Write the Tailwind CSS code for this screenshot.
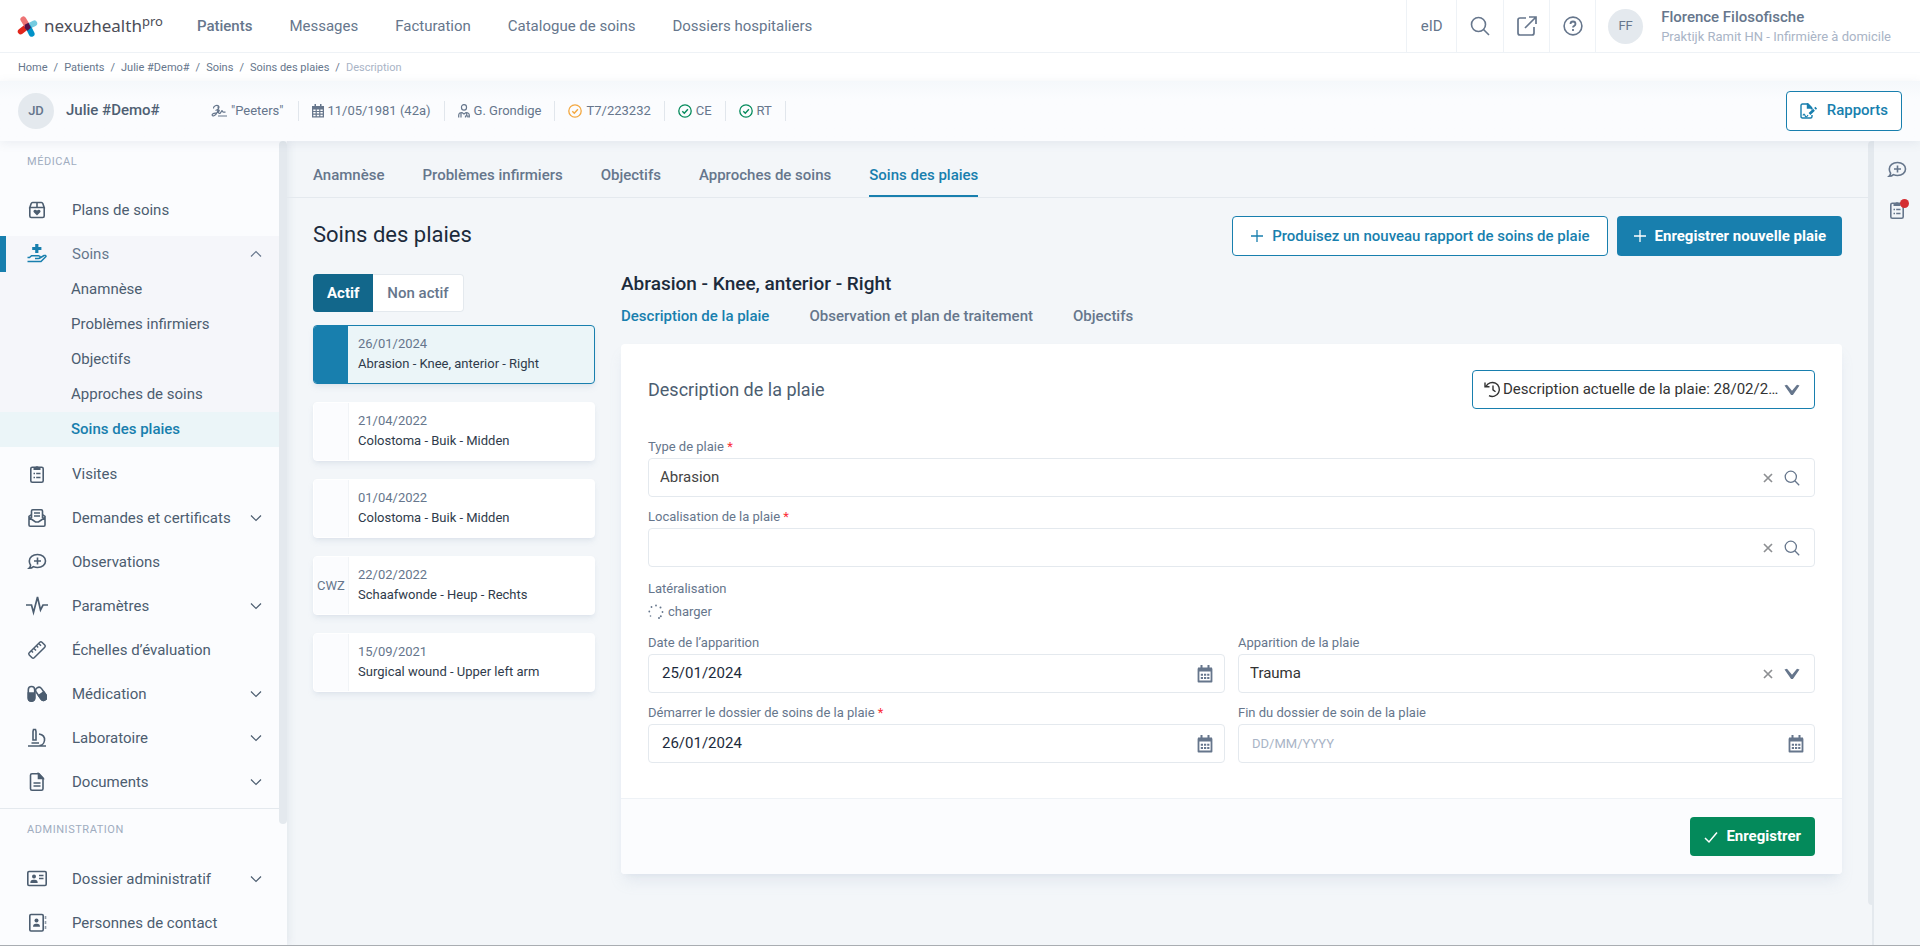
<!DOCTYPE html>
<html lang="fr">
<head>
  <meta charset="UTF-8">
  <meta name="viewport" content="width=device-width, initial-scale=1.0">
  <title>Soins des plaies</title>
  <script src="https://cdn.jsdelivr.net/npm/@tailwindcss/browser@4"></script>
</head>
<body class="flex h-screen flex-col overflow-hidden border-b border-[#a9adb2] bg-[#f3f6f9] font-['Roboto',sans-serif] text-[15px] text-[#66768c]">

  <!-- shared icons -->
  <svg class="hidden">
    <symbol id="down" viewBox="0 0 12 8"><path d="M1 1.5l5 5 5-5" fill="none" stroke="currentColor" stroke-width="1.2"/></symbol>
    <symbol id="bold-down" viewBox="0 0 16 12"><path d="M.5 1.5L3 .8l5 6 5-6 2.500.7L8.900 11H7.100z" fill="currentColor"/></symbol>
    <symbol id="cross" viewBox="0 0 10 10"><path d="M1 1l8 8M9 1l-8 8" fill="none" stroke="currentColor" stroke-width="1.700"/></symbol>
    <symbol id="plus" viewBox="0 0 14 14"><path d="M7 1v12M1 7h12" fill="none" stroke="currentColor" stroke-width="1.3"/></symbol>
    <symbol id="search" viewBox="0 0 20 20"><g fill="none" stroke="currentColor" stroke-width="1.6"><circle cx="8.5" cy="8.5" r="7"/><path d="M13.5 13.5l5.5 5.5"/></g></symbol>
    <symbol id="chat" viewBox="0 0 20 20"><g fill="none" stroke="currentColor" stroke-width="1.6"><path d="M10.500 2.500c4.700 0 8 2.800 8 6.500s-3.300 6.500-8 6.500c-1.500 0-2.800-.3-4-.9-1 1-2.500 1.700-4.500 1.700 1-.9 1.500-1.900 1.600-3-.8-1.200-1.300-2.600-1.300-4.300 0-3.700 3.500-6.500 8.200-6.500z"/><path d="M10.500 5.500v7M7 9h7"/></g></symbol>
    <symbol id="check" viewBox="0 0 14 14"><circle cx="7" cy="7" r="6.200" fill="none" stroke="currentColor" stroke-width="1.300"/><path d="M4.300 7.200l2 2 3.600-4" fill="none" stroke="currentColor" stroke-width="1.400"/></symbol>
    <symbol id="clip" viewBox="0 0 16 20"><rect x="1.800" y="3.300" width="12.400" height="15" rx="1.500" fill="none" stroke="currentColor" stroke-width="1.600"/><path d="M4.500 6V3.500h1.700a1.900 1.900 0 0 1 3.600 0h1.700V6z" fill="currentColor"/><path d="M4.500 9.500h1.500M7.200 9.500h4.300M4.500 13.500h1.500M7.200 13.500h4.300" stroke="currentColor" stroke-width="1.400"/></symbol>
    <symbol id="cal" viewBox="0 0 16 18"><path d="M1.500 4h13v12.500h-13z" fill="none" stroke="currentColor" stroke-width="1.800" stroke-linejoin="round"/><path d="M1 2.500h14v4H1zM3.500 0h2v3h-2zM10.500 0h2v3h-2z" fill="currentColor"/><path d="M3.800 9.700h8.600M3.800 12.900h8.600" stroke="currentColor" stroke-width="2" stroke-dasharray="2.200 1"/></symbol>
  </svg>

  <header class="flex h-[53px] shrink-0 items-stretch border-b border-[#eef2f6] bg-white">
    <a href="#" class="flex items-center gap-1.5 pl-[17px] text-[#4c4d57]">
      <svg class="size-[21px]" viewBox="0 0 20 20"><g stroke-width="5.500" stroke-linecap="round"><path d="M3.500 14.800L9 10.500" stroke="#e1261c"/><path d="M6 3.200L9.500 9" stroke="#ee7475"/><path d="M16.500 7L11 9.800" stroke="#74cbe0"/><path d="M11 11l3 6" stroke="#0092c8"/></g><path d="M7.300 8.300l3.700-1.800 2.200 4.700-3.300 2.800-2.600-2.500z" fill="#54124b"/></svg>
      <span class="flex items-start font-['Noto_Sans',sans-serif] text-[17px] leading-5"><span>nexuzhealth</span><sup class="top-0 text-[13px] leading-[10px]">pro</sup></span>
    </a>
    <nav class="ml-[34px] flex items-center gap-[37px]">
      <a href="#" class="font-medium">Patients</a>
      <a href="#">Messages</a>
      <a href="#">Facturation</a>
      <a href="#">Catalogue de soins</a>
      <a href="#">Dossiers hospitaliers</a>
    </nav>
    <div class="ml-auto flex items-stretch">
      <button class="w-[50px] border-l border-[#eef2f6]">eID</button>
      <button class="flex w-[47px] items-center justify-center border-l border-[#eef2f6]" aria-label="Rechercher"><svg class="size-5"><use href="#search"/></svg></button>
      <button class="flex w-[46px] items-center justify-center border-l border-[#eef2f6]" aria-label="Ouvrir"><svg class="size-5" viewBox="0 0 20 20" fill="none" stroke="currentColor" stroke-width="1.700"><path d="M9 2H3Q1 2 1 4v13q0 2 2 2h12q2 0 2-2v-6M12 1h7v7M19 1L8 12"/></svg></button>
      <button class="flex w-[47px] items-center justify-center border-x border-[#eef2f6]" aria-label="Aide"><svg class="size-5" viewBox="0 0 20 20" fill="none" stroke="currentColor" stroke-width="1.600"><circle cx="10" cy="10" r="8.900"/><path d="M7.500 8q0-2.500 2.500-2.500T12.500 8q0 1.200-1.300 1.900-1.200.6-1.200 1.600M10 13v2" stroke-width="1.800"/></svg></button>
      <div class="flex items-center pr-[29px] pl-3">
        <span class="flex size-[35px] items-center justify-center rounded-full bg-[#e4e9ee] text-[13px]">FF</span>
        <div class="ml-[18px] pt-0.5">
          <div class="text-[15px] leading-5 font-medium">Florence Filosofische</div>
          <div class="text-[13px] leading-5 text-[#a9b4c6]">Praktijk Ramit HN - Infirmière à domicile</div>
        </div>
      </div>
    </div>
  </header>

  <nav class="flex h-7 shrink-0 items-center gap-1.5 bg-white pt-0.5 pl-[18px] text-[11px]">
    <a href="#">Home</a><span>/</span>
    <a href="#">Patients</a><span>/</span>
    <a href="#">Julie #Demo#</a><span>/</span>
    <a href="#">Soins</a><span>/</span>
    <a href="#">Soins des plaies</a><span>/</span>
    <span class="text-[#a9b4c6]">Description</span>
  </nav>

  <section class="relative z-10 flex h-[60px] shrink-0 items-center bg-[#fbfcfe] bg-linear-to-b from-[#f5f8fb] to-[#fbfcfe] to-30% px-[18px] pb-px shadow-[0_2px_10px_rgba(90,110,140,0.10)]">
    <span class="flex size-9 items-center justify-center rounded-full bg-[#e4e9ee] text-[13px] font-medium">JD</span>
    <h1 class="ml-3 w-[145px] text-[15px] font-medium text-[#4f5f73]">Julie #Demo#</h1>
    <ul class="flex items-center text-[13px]">
      <li class="flex h-5 items-center gap-1 border-r border-[#e1e6ec] pr-3.5"><svg class="size-4" viewBox="0 0 16 16" fill="none" stroke="currentColor" stroke-width="1.200"><path d="M2.500 5.500c-.5-2.500 3.500-4 5-2.500s-.5 4-3 4.500M7 3.500c1 3-1 8-4 9.200-2 .6-2.500-1-1-2 1.500-.8 3.500-.5 5-1.500s1.500-2 1-2-1.500 2 0 3 2.500-2.500 3-2.500.5 1.500 1.500 1.500h2M7 13h9"/></svg>"Peeters"</li>
      <li class="flex h-5 items-center gap-1 border-r border-[#e1e6ec] px-[13px]"><svg class="h-3.5 w-3" viewBox="0 0 12 14"><path d="M0 2h12v11.500H0z" fill="currentColor"/><path d="M1.300 6.200h2.300M4.800 6.200h2.400M8.400 6.200h2.300M1.300 8.800h2.300M4.800 8.800h2.400M8.400 8.800h2.300M1.300 11.400h2.300M4.800 11.400h2.400M8.400 11.400h2.300" stroke="#fff" stroke-width="1.500"/><path d="M2.500 0h1.500v3H2.500zM8 0h1.500v3H8z" fill="currentColor"/></svg>11/05/1981 (42a)</li>
      <li class="flex h-5 items-center gap-1 border-r border-[#e1e6ec] px-[13px]"><svg class="h-3.5 w-3" viewBox="0 0 12 14" fill="none" stroke="currentColor" stroke-width="1.200"><rect x="3.500" y=".7" width="5" height="5.500" rx="2.400"/><path d="M.7 13.500v-2Q.7 8.500 4 8.500l2 1.500 2-1.500q3.300 0 3.300 3v2M3 9v4.500M8.700 9v2.500M7.500 13.500v-1.500h2.400v1.500"/></svg>G. Grondige</li>
      <li class="flex h-5 items-center gap-1 border-r border-[#e1e6ec] px-[13px]"><svg class="size-3.5 text-[#f3a73f]"><use href="#check"/></svg>T7/223232</li>
      <li class="flex h-5 items-center gap-1 border-r border-[#e1e6ec] px-[13px]"><svg class="size-3.5 text-[#048a5b]"><use href="#check"/></svg>CE</li>
      <li class="flex h-5 items-center gap-1 border-r border-[#e1e6ec] px-[13px]"><svg class="size-3.5 text-[#048a5b]"><use href="#check"/></svg>RT</li>
    </ul>
    <button class="ml-auto flex h-10 items-center gap-2.5 rounded border border-[#187fae] bg-white px-[13px] text-[15px] font-medium text-[#187fae]">
      <svg class="h-4 w-[17px]" viewBox="0 0 17 16" fill="none" stroke="currentColor" stroke-width="1.400"><path d="M12 12v1.500q0 1.500-1.500 1.500h-8Q1 15 1 13.500v-11Q1 1 2.500 1H8l3.500 3.500v2"/><path d="M7.500 1v4h4z" fill="currentColor"/><path d="M9.500 11l4.500-4.200M15 5.900l1.300-1.200" stroke-width="2.600"/><path d="M3 12.500q1-3 2 0t3-.5" stroke-width="1.200"/></svg>
      Rapports
    </button>
  </section>

  <div class="flex min-h-0 flex-1">
    <aside class="flex w-[287px] shrink-0 bg-[#fbfcfe] shadow-[2px_0_8px_rgba(90,110,140,0.10)]">
      <div class="min-w-0 flex-1 overflow-hidden text-[15px] text-[#4c5d70]">
        <h2 class="flex h-[51px] items-start px-[27px] pt-[13px] text-[11px] leading-4 tracking-wider text-[#a0acbf]">MÉDICAL</h2>
        <a href="#" class="flex h-9 items-center px-[27px]"><svg class="mr-[25px] size-5" viewBox="0 0 20 20" fill="none" stroke="currentColor" stroke-width="1.600"><path d="M2.800 7.500v8.500q0 1.500 1.500 1.500h11.400q1.500 0 1.500-1.500V7.500M2.800 7.500l1.400-4q.4-1 1.400-1h8.800q1 0 1.400 1l1.400 4zM10 2.500v5"/><path d="M10 15.500l-3.200-3.200c-1.300-1.500.9-4 3.200-1.700 2.300-2.300 4.500.2 3.200 1.700z" fill="currentColor" stroke="none"/></svg>Plans de soins</a>
        <div class="mt-2 mb-[9px] bg-[#f5f6fa]">
          <button class="flex h-9 w-full items-center border-l-[6px] border-[#187fae] pr-[17px] pl-[21px] text-left text-[#66768c]"><svg class="mr-[25px] size-5 text-[#187fae]" viewBox="0 0 20 20" fill="none" stroke="currentColor" stroke-width="1.500"><path d="M8.200 0h3.200v3h3v3h-3v3H8.200V6h-3V3h3z" fill="currentColor" stroke="none"/><path d="M.5 13.500h2l2-1.700h7q1.700.2 1.700 1.300T11.500 14.500H8M12 14.500l5-3q2-.5 2 1L14 17.500H.5"/></svg><span class="flex-1">Soins</span><svg class="h-2 w-3 rotate-180"><use href="#down"/></svg></button>
          <a href="#" class="flex h-[35px] items-center pl-[71px]">Anamnèse</a>
          <a href="#" class="flex h-[35px] items-center pl-[71px]">Problèmes infirmiers</a>
          <a href="#" class="flex h-[35px] items-center pl-[71px]">Objectifs</a>
          <a href="#" class="flex h-[35px] items-center pl-[71px]">Approches de soins</a>
          <a href="#" class="flex h-[35px] items-center bg-[#ebf5f8] pl-[71px] font-medium text-[#187fae]">Soins des plaies</a>
        </div>
        <div class="flex flex-col gap-2 border-b border-[#e4e9ee] pb-2">
          <a href="#" class="flex h-9 items-center px-[27px]"><svg class="mr-[25px] size-5"><use href="#clip"/></svg>Visites</a>
          <button class="flex h-9 items-center pr-[17px] pl-[27px] text-left"><svg class="mr-[25px] size-5" viewBox="0 0 20 20" fill="none" stroke="currentColor" stroke-width="1.600"><path d="M4.500 10V3q0-1.200 1.200-1.200h8.600q1.200 0 1.200 1.200v7M7 5h6M7 8h6M4.500 6.500L2 8.500V17q0 1.200 1.200 1.200h13.600Q18 18.200 18 17V8.500l-2.500-2M2 9.500l6.500 4.500h3L18 9.500"/></svg><span class="flex-1">Demandes et certificats</span><svg class="h-2 w-3"><use href="#down"/></svg></button>
          <a href="#" class="flex h-9 items-center px-[27px]"><svg class="mr-[25px] size-5"><use href="#chat"/></svg>Observations</a>
          <button class="flex h-9 items-center pr-[17px] pl-[27px] text-left"><svg class="mr-[25px] size-5 overflow-visible" viewBox="0 0 20 20" fill="none" stroke="currentColor" stroke-width="1.700"><path d="M-1 9h5.500l2 7.500L10.500 1l3 13L16 9h5"/></svg><span class="flex-1">Paramètres</span><svg class="h-2 w-3"><use href="#down"/></svg></button>
          <a href="#" class="flex h-9 items-center px-[27px]"><svg class="mr-[25px] size-5" viewBox="0 0 20 20" fill="none" stroke="currentColor" stroke-width="1.500"><rect x="1" y="6.500" width="18" height="7" rx="1.500" transform="rotate(-45 10 10)"/><path d="M7 8.500l2 2M9.700 6l1.500 1.500M12 3.700l2 2M4.500 11l1.500 1.500"/></svg>Échelles d’évaluation</a>
          <button class="flex h-9 items-center pr-[17px] pl-[27px] text-left"><svg class="mr-[25px] size-5" viewBox="0 0 20 20" fill="none" stroke="currentColor" stroke-width="1.600"><rect x="1.300" y="2.500" width="6.400" height="14.500" rx="3.200"/><path d="M1.300 9h6.400v5a3.200 3.200 0 0 1-6.400 0z" fill="currentColor"/><rect x="11" y="2.500" width="6.400" height="14.500" rx="3.200" transform="rotate(-35 14.200 9.700)"/><path d="M11 9.700h6.400v4a3.200 3.200 0 0 1-6.400 0z" fill="currentColor" transform="rotate(-35 14.200 9.700)"/></svg><span class="flex-1">Médication</span><svg class="h-2 w-3"><use href="#down"/></svg></button>
          <button class="flex h-9 items-center pr-[17px] pl-[27px] text-left"><svg class="mr-[25px] size-5" viewBox="0 0 20 20" fill="none" stroke="currentColor" stroke-width="1.600"><path d="M6 3.500L6.500 1.500h2L9 3.500V12H6zM12 6c4 .5 6 3 5.500 6.500-.4 2.500-2.500 5-5 5M4.500 15h7.500M1 18h18"/></svg><span class="flex-1">Laboratoire</span><svg class="h-2 w-3"><use href="#down"/></svg></button>
          <button class="flex h-9 items-center pr-[17px] pl-[27px] text-left"><svg class="mr-[25px] size-5" viewBox="0 0 20 20" fill="none" stroke="currentColor" stroke-width="1.600"><path d="M12 1.800H5Q3.500 1.800 3.500 3.300v13.400q0 1.500 1.500 1.500h9.500q1.500 0 1.500-1.500V6zM6.500 11h7M6.500 14h7"/><path d="M11.500 1.800v4.700h4.500z" fill="currentColor"/></svg><span class="flex-1">Documents</span><svg class="h-2 w-3"><use href="#down"/></svg></button>
        </div>
        <h2 class="flex h-[52px] items-start px-[27px] pt-[13px] text-[11px] leading-4 tracking-wider text-[#a0acbf]">ADMINISTRATION</h2>
        <div class="flex flex-col gap-2">
          <button class="flex h-9 items-center pr-[17px] pl-[27px] text-left"><svg class="mr-[25px] size-5" viewBox="0 0 20 20" fill="none" stroke="currentColor" stroke-width="1.600"><rect x=".8" y="2.500" width="18.400" height="14" rx="1.200"/><path d="M12 6.500h4.500M12 9.500h4.500"/><circle cx="7" cy="7.500" r="2" fill="currentColor" stroke="none"/><path d="M3.300 14q0-3.200 3-3.200h1.400q3 0 3 3.200z" fill="currentColor" stroke="none"/></svg><span class="flex-1">Dossier administratif</span><svg class="h-2 w-3"><use href="#down"/></svg></button>
          <a href="#" class="flex h-9 items-center px-[27px]"><svg class="mr-[25px] size-5" viewBox="0 0 20 20" fill="none" stroke="currentColor" stroke-width="1.600"><rect x="2.800" y="1.500" width="13.400" height="16.500" rx="1.200"/><path d="M18.500 3v3M18.500 8v3M18.500 13v3" opacity=".6"/><circle cx="9.500" cy="7.500" r="2" fill="currentColor" stroke="none"/><path d="M6 13.800q0-3 3-3h1q3 0 3 3z" fill="currentColor" stroke="none"/></svg>Personnes de contact</a>
        </div>
      </div>
      <div class="w-2"><div class="h-[85%] rounded-full bg-[#e4e9ee]"></div></div>
    </aside>

    <main class="min-w-0 flex-1">
      <nav class="flex h-[57px] items-stretch gap-[38px] border-b border-[#e4e9ee] pl-[26px] font-medium">
        <a href="#" class="flex items-center pt-3">Anamnèse</a>
        <a href="#" class="flex items-center pt-3">Problèmes infirmiers</a>
        <a href="#" class="flex items-center pt-3">Objectifs</a>
        <a href="#" class="flex items-center pt-3">Approches de soins</a>
        <a href="#" class="flex items-center border-b-2 border-[#187fae] pt-3.5 text-[#187fae]">Soins des plaies</a>
      </nav>

      <div class="px-[26px] pt-[18px]">
        <div class="flex items-center gap-[9px]">
          <h2 class="flex-1 pb-1 text-[22px] text-[#1c2b3c]">Soins des plaies</h2>
          <button class="flex h-10 items-center gap-2 rounded border border-[#187fae] bg-white px-[17px] font-medium text-[#187fae]"><svg class="size-3.5"><use href="#plus"/></svg>Produisez un nouveau rapport de soins de plaie</button>
          <button class="flex h-10 items-center gap-2 rounded bg-[#187fae] px-4 font-bold text-white"><svg class="size-3.5"><use href="#plus"/></svg>Enregistrer nouvelle plaie</button>
        </div>

        <div class="mt-[18px] flex gap-[26px]">
          <div class="w-[282px] shrink-0">
            <div class="flex h-[38px] w-fit text-[15px]">
              <button class="rounded-l bg-[#12678b] px-3.5 font-bold text-white">Actif</button>
              <button class="rounded-r border border-l-0 border-[#e4e9ee] bg-white px-3.5 font-medium">Non actif</button>
            </div>
            <ul class="mt-[13px] flex flex-col gap-[18px] text-[13px] leading-5 text-[#2f3b4b]">
              <li class="flex h-[59px] overflow-hidden rounded border border-[#187fae] bg-[#ebf5f8] shadow-md shadow-slate-400/15"><div class="w-[34px] bg-[#187fae]"></div><div class="px-2.5 pt-2"><div class="text-[#66768c]">26/01/2024</div>Abrasion - Knee, anterior - Right</div></li>
              <li class="flex h-[59px] rounded border border-white bg-white shadow-md shadow-slate-400/15"><div class="w-[35px] border-r border-[#f1f4f7] bg-[#fbfcfe]"></div><div class="px-[9px] pt-2"><div class="text-[#66768c]">21/04/2022</div>Colostoma - Buik - Midden</div></li>
              <li class="flex h-[59px] rounded border border-white bg-white shadow-md shadow-slate-400/15"><div class="w-[35px] border-r border-[#f1f4f7] bg-[#fbfcfe]"></div><div class="px-[9px] pt-2"><div class="text-[#66768c]">01/04/2022</div>Colostoma - Buik - Midden</div></li>
              <li class="flex h-[59px] rounded border border-white bg-white shadow-md shadow-slate-400/15"><div class="flex w-[35px] items-center justify-center border-r border-[#f1f4f7] bg-[#fbfcfe] text-[#66768c]">CWZ</div><div class="px-[9px] pt-2"><div class="text-[#66768c]">22/02/2022</div>Schaafwonde - Heup - Rechts</div></li>
              <li class="flex h-[59px] rounded border border-white bg-white shadow-md shadow-slate-400/15"><div class="w-[35px] border-r border-[#f1f4f7] bg-[#fbfcfe]"></div><div class="px-[9px] pt-2"><div class="text-[#66768c]">15/09/2021</div>Surgical wound - Upper left arm</div></li>
            </ul>
          </div>

          <div class="min-w-0 flex-1">
            <h3 class="text-[19px] leading-5 font-medium text-[#1c2b3c]">Abrasion - Knee, anterior - Right</h3>
            <nav class="mt-3 flex gap-10 leading-5 font-medium">
              <a href="#" class="text-[#187fae]">Description de la plaie</a>
              <a href="#">Observation et plan de traitement</a>
              <a href="#">Objectifs</a>
            </nav>

            <form class="mt-[18px] overflow-hidden rounded bg-white shadow-lg shadow-slate-400/15">
              <div class="px-[27px] pt-[26px] pb-[35px]">
                <div class="mb-7 flex items-center justify-between">
                  <h4 class="text-lg text-[#4c5d70]">Description de la plaie</h4>
                  <div class="flex h-[39px] w-[343px] items-center rounded border border-[#187fae] pr-3.5 pl-[11px] text-[#333]">
                    <svg class="mr-0.5 size-[17px] shrink-0" viewBox="0 0 17 17" fill="none" stroke="currentColor" stroke-width="1.400"><path d="M2 5.500A7 7 0 1 1 5 14.600M1 1.500v4.300h4.500M9 4.500v4.300l2.500 2"/></svg>
                    <select aria-label="Version de la description" class="min-w-0 flex-1 appearance-none truncate bg-transparent"><option>Description actuelle de la plaie: 28/02/2024</option></select>
                    <svg class="h-3 w-4 shrink-0 text-[#66768c]"><use href="#bold-down"/></svg>
                  </div>
                </div>

                <div class="grid grid-cols-2 gap-x-[13px] gap-y-2.5">
                  <div class="col-span-2">
                    <label for="type" class="block h-[21px] text-[13px] leading-5">Type de plaie <span class="text-red-500">*</span></label>
                    <div class="flex h-[39px] items-center rounded border border-[#e4e9ee] pr-3.5 pl-[11px]">
                      <input id="type" value="Abrasion" class="min-w-0 flex-1 text-[#444] outline-none">
                      <button type="button" aria-label="Effacer" class="mr-[11px] text-[#8d8f92]"><svg class="size-2.5"><use href="#cross"/></svg></button>
                      <button type="button" aria-label="Rechercher"><svg class="size-4"><use href="#search"/></svg></button>
                    </div>
                  </div>
                  <div class="col-span-2">
                    <label for="lieu" class="block h-[21px] text-[13px] leading-5">Localisation de la plaie <span class="text-red-500">*</span></label>
                    <div class="flex h-[39px] items-center rounded border border-[#e4e9ee] pr-3.5 pl-[11px]">
                      <input id="lieu" class="min-w-0 flex-1 text-[#444] outline-none">
                      <button type="button" aria-label="Effacer" class="mr-[11px] text-[#8d8f92]"><svg class="size-2.5"><use href="#cross"/></svg></button>
                      <button type="button" aria-label="Rechercher"><svg class="size-4"><use href="#search"/></svg></button>
                    </div>
                  </div>
                  <div class="col-span-2 h-[46px] text-[13px]">
                    <div class="leading-[23px]">Latéralisation</div>
                    <div class="flex items-center gap-1 leading-[23px]">
                      <svg class="size-4" viewBox="0 0 16 16" fill="currentColor"><circle cx="8" cy="1.500" r=".9"/><circle cx="12.500" cy="3.500" r="1"/><circle cx="14.500" cy="8" r=".9"/><circle cx="12.800" cy="12.300" r="1"/><circle cx="11" cy="14" r="1"/><circle cx="2.500" cy="12" r=".8"/><circle cx="1.300" cy="7.500" r=".9"/><circle cx="3.500" cy="3" r=".9"/></svg>
                      charger
                    </div>
                  </div>
                  <div>
                    <label for="debut" class="block h-[21px] text-[13px] leading-5">Date de l’apparition</label>
                    <div class="flex h-[39px] items-center rounded border border-[#e4e9ee] pr-[11px] pl-[13px]">
                      <input id="debut" value="25/01/2024" class="min-w-0 flex-1 text-[#1c2b3c] outline-none">
                      <button type="button" aria-label="Calendrier"><svg class="h-[18px] w-4"><use href="#cal"/></svg></button>
                    </div>
                  </div>
                  <div>
                    <label for="cause" class="block h-[21px] text-[13px] leading-5">Apparition de la plaie</label>
                    <div class="flex h-[39px] items-center rounded border border-[#e4e9ee] pr-3.5 pl-[11px]">
                      <select id="cause" class="min-w-0 flex-1 appearance-none bg-transparent text-[#333] outline-none"><option>Trauma</option></select>
                      <button type="button" aria-label="Effacer" class="mr-[11px] text-[#8d8f92]"><svg class="size-2.5"><use href="#cross"/></svg></button>
                      <svg class="h-3 w-4"><use href="#bold-down"/></svg>
                    </div>
                  </div>
                  <div>
                    <label for="dossier" class="block h-[21px] text-[13px] leading-5">Démarrer le dossier de soins de la plaie <span class="text-red-500">*</span></label>
                    <div class="flex h-[39px] items-center rounded border border-[#e4e9ee] pr-[11px] pl-[13px]">
                      <input id="dossier" value="26/01/2024" class="min-w-0 flex-1 text-[#1c2b3c] outline-none">
                      <button type="button" aria-label="Calendrier"><svg class="h-[18px] w-4"><use href="#cal"/></svg></button>
                    </div>
                  </div>
                  <div>
                    <label for="fin" class="block h-[21px] text-[13px] leading-5">Fin du dossier de soin de la plaie</label>
                    <div class="flex h-[39px] items-center rounded border border-[#e4e9ee] pr-2.5 pl-[13px]">
                      <input id="fin" placeholder="DD/MM/YYYY" class="min-w-0 flex-1 text-[13px] outline-none placeholder:text-[#a9b4c6]">
                      <button type="button" aria-label="Calendrier"><svg class="h-[18px] w-4"><use href="#cal"/></svg></button>
                    </div>
                  </div>
                </div>
              </div>
              <div class="flex h-[76px] items-center justify-end border-t border-[#eef2f6] bg-[#fbfcfe] px-[27px]">
                <button class="flex h-[39px] items-center gap-2 rounded bg-[#048a5b] px-3.5 font-bold text-white"><svg class="h-3.5 w-3.5" viewBox="0 0 14 14" fill="none" stroke="currentColor" stroke-width="1.500"><path d="M1 8l4 4 8-9.500"/></svg>Enregistrer</button>
              </div>
            </form>
          </div>
        </div>
      </div>
    </main>

    <div class="w-1"><div class="h-[95%] rounded-l-full bg-[#e4e9ee]"></div></div>
    <aside class="flex w-12 shrink-0 flex-col items-center gap-5 border-l-2 border-[#e4e9ee] pt-[19px]">
      <button aria-label="Observation"><svg class="size-5"><use href="#chat"/></svg></button>
      <button class="relative" aria-label="Tâches"><svg class="size-5"><use href="#clip"/></svg><span class="absolute -top-px -right-0.5 size-[9px] rounded-full bg-[#d42e33]"></span></button>
    </aside>
  </div>
</body>
</html>
